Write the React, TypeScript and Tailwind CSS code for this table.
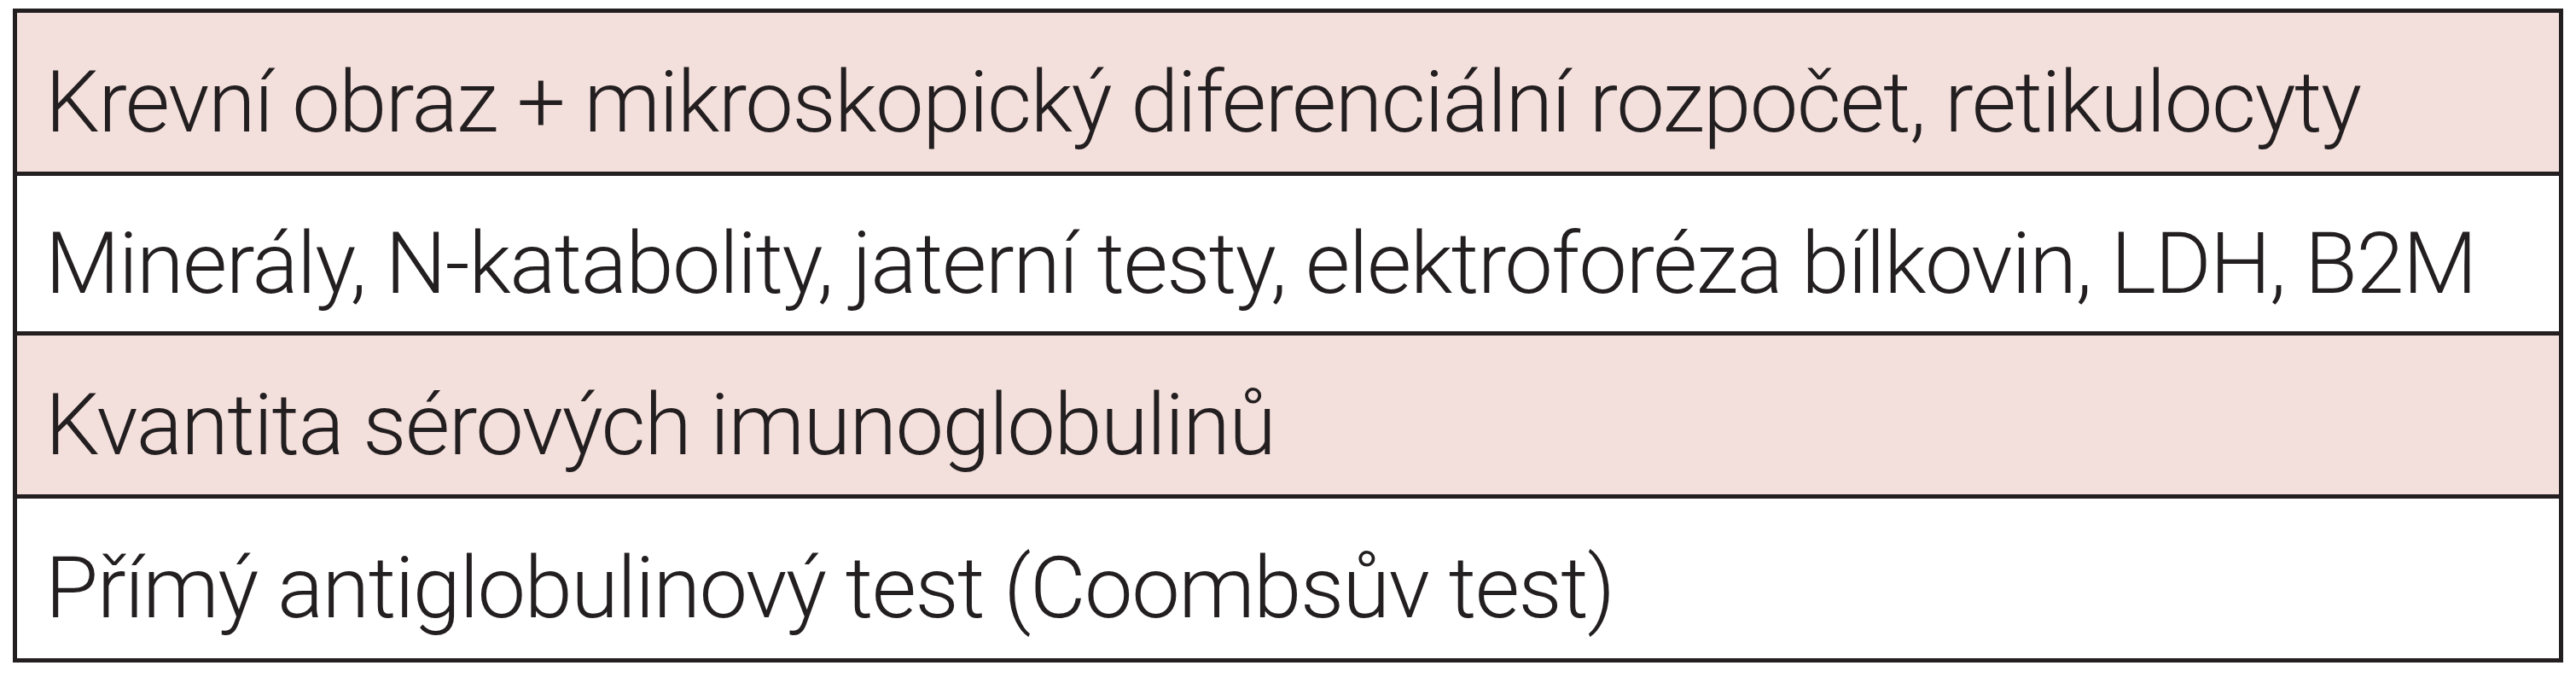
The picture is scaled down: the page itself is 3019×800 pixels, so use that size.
const rows = [
  { text: "Krevní obraz + mikroskopický diferenciální rozpočet, retikulocyty", pink: true },
  { text: "Minerály, N-katabolity, jaterní testy, elektroforéza bílkovin, LDH, B2M", pink: false },
  { text: "Kvantita sérových imunoglobulinů", pink: true },
  { text: "Přímý antiglobulinový test (Coombsův test)", pink: false },
];

export default function App() {
  return (
    <div className="w-[3019px] h-[800px] bg-white pt-[10px] pl-[15px]">
      <div className="w-[2989px] border-[5px] border-[#231f20] flex flex-col">
        {rows.map((row, i) => (
          <div
            key={i}
            className={
              (row.pink ? "bg-[#f3dfdb] h-[191px] " : "bg-white h-[187px] ") +
              (i < rows.length - 1 ? "border-b-[5px] border-[#231f20] " : "") +
              "flex items-center pl-[33px] pt-[22px]"
            }
          >
            <span className="font-['Roboto',sans-serif] font-light text-[101px] tracking-[-1.5px] leading-none text-[#231f20] whitespace-nowrap">
              {row.text}
            </span>
          </div>
        ))}
      </div>
    </div>
  );
}
